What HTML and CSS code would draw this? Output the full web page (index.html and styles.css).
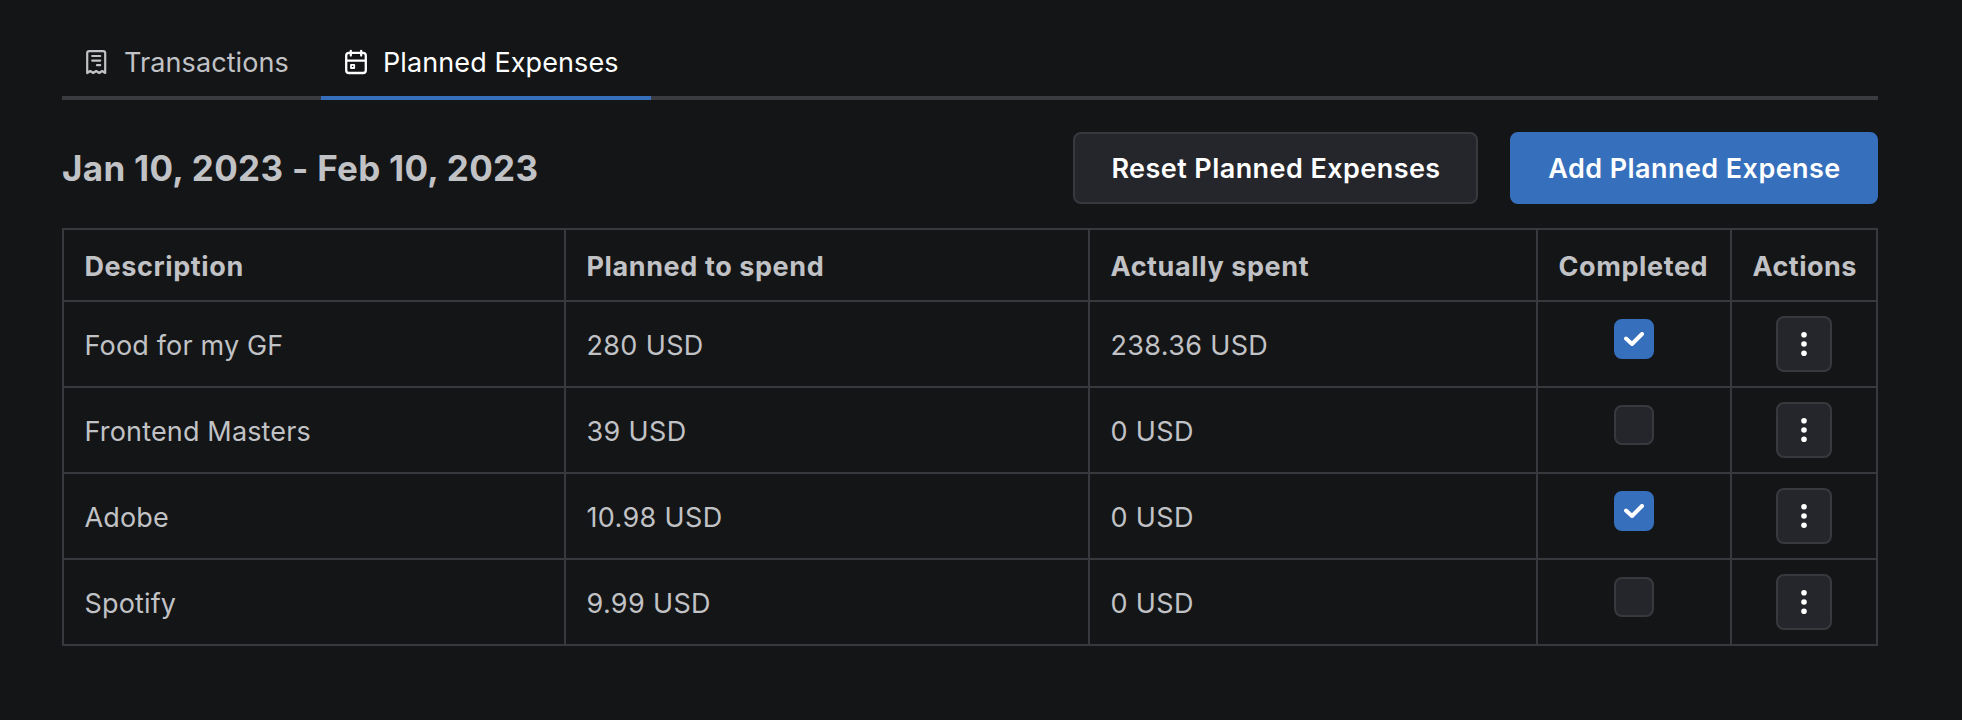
FILE: index.html
```html
<!DOCTYPE html>
<html lang="en">
<head>
<meta charset="utf-8">
<title>Planned Expenses</title>
<link rel="stylesheet" href="styles.css">
</head>
<body>
<svg class="sprite" aria-hidden="true">
  <symbol id="check" viewBox="0 0 20 14"><path d="M2 6.5 8 12 18 2" fill="none" stroke="currentColor" stroke-width="4" stroke-linecap="round" stroke-linejoin="round"/></symbol>
  <symbol id="dots" viewBox="0 0 6 24"><circle cx="3" cy="2.8" r="2.8"/><circle cx="3" cy="12" r="2.8"/><circle cx="3" cy="21.2" r="2.8"/></symbol>
</svg>
<main class="page">
  <nav class="tabs">
    <a class="tab tab-transactions">
      <svg class="tab-icon" viewBox="0 0 28 28" fill="none" stroke="currentColor" stroke-width="2.2" stroke-linejoin="round" stroke-linecap="round"><path d="M5.2 25V5.2a2 2 0 0 1 2-2h14a2 2 0 0 1 2 2V25l-3-2-3 2-3-2-3 2-3-2zM10.2 8h8M10.2 12.6h8M15 17.2h3.2"/></svg>
      <span>Transactions</span>
    </a>
    <a class="tab tab-planned active">
      <svg class="tab-icon" viewBox="0 0 28 28" fill="none" stroke="currentColor" stroke-width="2.3" stroke-linejoin="round" stroke-linecap="round"><rect x="5.2" y="4.8" width="19.6" height="20.2" rx="2.8"/><path d="M5.2 12.6h19.6M9.8 3v4.6M20.2 3v4.6"/><rect x="10" y="16.8" width="3.2" height="3.2" stroke-width="1.8"/></svg>
      <span>Planned Expenses</span>
    </a>
  </nav>
  <header class="toolbar">
    <h1 class="period">Jan 10, 2023 - Feb 10, 2023</h1>
    <div class="buttons">
      <button class="button reset">Reset Planned Expenses</button>
      <button class="button add">Add Planned Expense</button>
    </div>
  </header>
  <table class="expenses">
    <colgroup><col class="col-description"><col class="col-planned"><col class="col-actual"><col class="col-completed"><col class="col-actions"></colgroup>
    <thead>
      <tr><th>Description</th><th>Planned to spend</th><th>Actually spent</th><th>Completed</th><th>Actions</th></tr>
    </thead>
    <tbody>
      <tr><td>Food for my GF</td><td>280 USD</td><td>238.36 USD</td><td><span class="checkbox checked"><svg><use href="#check"/></svg></span></td><td><button class="menu"><svg><use href="#dots"/></svg></button></td></tr>
      <tr><td>Frontend Masters</td><td>39 USD</td><td>0 USD</td><td><span class="checkbox"></span></td><td><button class="menu"><svg><use href="#dots"/></svg></button></td></tr>
      <tr><td>Adobe</td><td>10.98 USD</td><td>0 USD</td><td><span class="checkbox checked"><svg><use href="#check"/></svg></span></td><td><button class="menu"><svg><use href="#dots"/></svg></button></td></tr>
      <tr><td>Spotify</td><td>9.99 USD</td><td>0 USD</td><td><span class="checkbox"></span></td><td><button class="menu"><svg><use href="#dots"/></svg></button></td></tr>
    </tbody>
  </table>
</main>
</body>
</html>
```
FILE: styles.css
```css
* { box-sizing: border-box; }

body {
  margin: 0;
  background: #141517;
  color: #c1c2c5;
  font: 27px/42px Inter, "Liberation Sans", sans-serif;
}

.sprite { display: none; }

.page { padding: 28px 84px 0 62px; }

.tabs {
  display: flex;
  height: 72px;
  box-shadow: inset 0 -4px #3a3b41;
}

.tab {
  display: flex;
  align-items: center;
  gap: 14px;
  padding: 1px 20px 0;
  border-bottom: 4px solid transparent;
  letter-spacing: 0.09px;
}

.tab-transactions { width: 259px; }
.tab-planned { width: 330px; }

.tab.active {
  color: #fff;
  border-color: #3670bd;
}

.tab-icon { width: 28px; height: 28px; margin-bottom: 1px; }

.toolbar {
  display: flex;
  justify-content: space-between;
  align-items: center;
  height: 72px;
  margin: 32px 0 24px;
}

.period {
  margin: 0;
  padding-bottom: 1px;
  font-size: 35px;
  font-weight: 700;
  letter-spacing: 0.3px;
}

.buttons { display: flex; gap: 32px; }

.button {
  height: 72px;
  padding: 2px 0 0 1px;
  border: 2px solid #38393f;
  border-radius: 8px;
  color: #fff;
  font: 600 27px/42px Inter, "Liberation Sans", sans-serif;
  letter-spacing: 0.43px;
  white-space: nowrap;
}

.reset { width: 405px; background: #25262b; }
.add { width: 368px; background: #3670bd; border-color: #3670bd; }

.expenses {
  width: 1816px;
  table-layout: fixed;
  border-collapse: collapse;
}

.col-description { width: 502px; }
.col-planned { width: 524px; }
.col-actual { width: 448px; }
.col-completed { width: 194px; }
.col-actions { width: 146px; }

th, td {
  padding: 3px 0 0 20.5px;
  border: 2px solid #38393f;
  text-align: left;
  white-space: nowrap;
}

th {
  height: 72px;
  font-weight: 700;
  letter-spacing: 0.6px;
}

th:last-child { letter-spacing: 0.45px; }

td {
  height: 86px;
  letter-spacing: 0.16px;
}

td:nth-child(2), td:nth-child(3) { letter-spacing: 0.35px; }

td:nth-child(n + 4) {
  padding: 14px 0;
  text-align: center;
  vertical-align: top;
}

.checkbox {
  display: flex;
  align-items: center;
  justify-content: center;
  width: 40px;
  height: 40px;
  margin: 3px auto 0;
  border: 2px solid #38393f;
  border-radius: 8px;
  background: #25262b;
  color: #fff;
}

.checkbox.checked { background: #3670bd; border-color: #3670bd; }
.checkbox svg { width: 20px; height: 14px; }

.menu {
  display: flex;
  align-items: center;
  justify-content: center;
  width: 56px;
  height: 56px;
  margin: 0 auto;
  padding: 0;
  border: 2px solid #38393f;
  border-radius: 8px;
  background: #25262b;
}

.menu svg { width: 6px; height: 24px; fill: #fff; }
```
